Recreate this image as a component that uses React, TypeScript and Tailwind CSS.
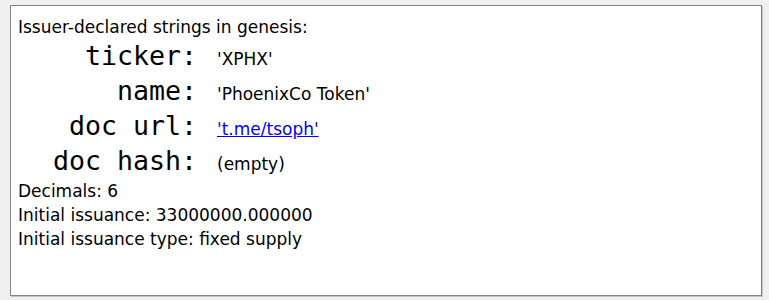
export default function App() {
  const rows = [
    { label: "ticker:", value: "'XPHX'" },
    { label: "name:", value: "'PhoenixCo Token'" },
    { label: "doc url:", value: "'t.me/tsoph'", link: true },
    { label: "doc hash:", value: "(empty)" },
  ];

  return (
    <div className="flex h-[300px] w-full flex-col bg-[#f0f0f0] pb-[4px] pl-[10px] pr-[7px] pt-[5px]">
      {/* Frame */}
      <div className="flex-1 border border-[#828282] bg-white pl-[7px] pt-[9px] text-[17px] text-black shadow-[1px_1px_0_#c4c4c4] [font-family:'DejaVu_Sans',Verdana,sans-serif]">
        <p className="leading-[24px]">Issuer-declared strings in genesis:</p>

        <div className="grid grid-cols-[179px_1fr] gap-x-[20px]">
          {rows.map((r) => (
            <div key={r.label} className="col-span-2 grid h-[35px] grid-cols-subgrid items-baseline">
              <span className="text-right text-[26.6px] leading-[33px] [font-family:'DejaVu_Sans_Mono',monospace]">
                {r.label}
              </span>
              {r.link ? (
                <a href="#" className="text-[#0000ff] underline">
                  {r.value}
                </a>
              ) : (
                <span>{r.value}</span>
              )}
            </div>
          ))}
        </div>

        <p className="leading-[24px]">Decimals: 6</p>
        <p className="leading-[24px]">Initial issuance: 33000000.000000</p>
        <p className="leading-[24px]">Initial issuance type: fixed supply</p>
      </div>
    </div>
  );
}
